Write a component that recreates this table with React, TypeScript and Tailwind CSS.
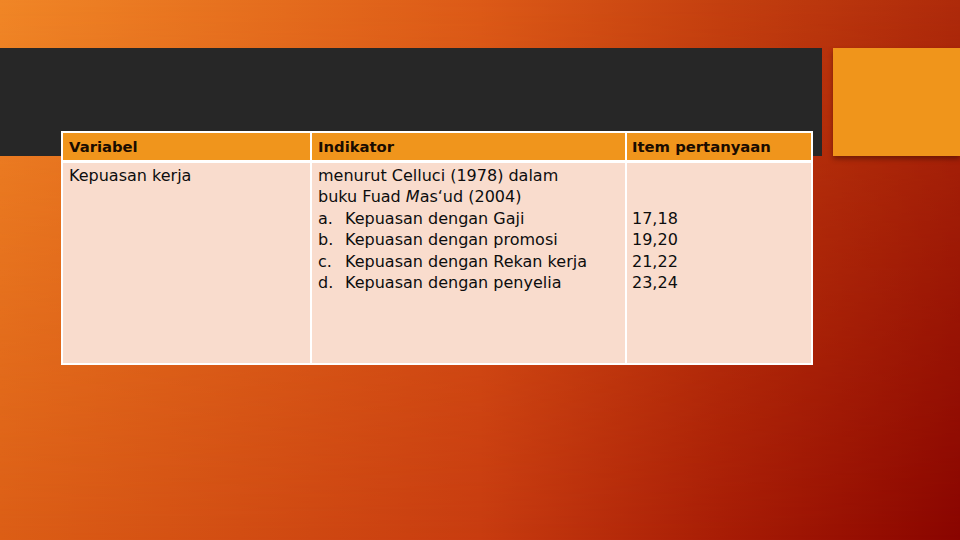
import React from "react";

export default function App() {
  const font = { fontFamily: '"DejaVu Sans", Verdana, sans-serif' };
  return (
    <div
      className="w-[960px] h-[540px] overflow-hidden bg-[linear-gradient(to_right,#dc5e16_0%,#c83c10_50%,#a81d06_75%,#8a0500_100%)]"
      style={font}
    >
      <div className="w-[960px] h-[540px] bg-[linear-gradient(to_right,#f08626_0%,#dc5a17_50%,#c4400f_75%,#ae2a0a_100%)] [mask-image:linear-gradient(to_bottom,black_0%,transparent_100%)]" />
      <div className="relative -mt-[540px]">
        <div className="pt-[48px] flex">
          <div className="w-[822px] h-[108px] bg-[#272727]" />
          <div className="ml-[11px] w-[127px] h-[108px] bg-[#f0951b] shadow-[0_3px_5px_rgba(0,0,0,0.35)]" />
        </div>
        <div className="relative -mt-[25px] ml-[61px]">
          <table className="w-[750px] border-collapse table-fixed text-[#0d0d0d]">
            <colgroup>
              <col className="w-[249px]" />
              <col className="w-[315px]" />
              <col className="w-[186px]" />
            </colgroup>
            <thead>
              <tr className="h-[29px] bg-[#f0951c] text-[14.8px] font-bold leading-[20px] text-[#1a0c00]">
                <th className="border-2 border-b-[3px] border-white px-[6px] pt-[1px] text-left align-middle">Variabel</th>
                <th className="border-2 border-b-[3px] border-white px-[6px] pt-[1px] text-left align-middle">Indikator</th>
                <th className="border-2 border-b-[3px] border-white px-[5px] pt-[1px] text-left align-middle">Item pertanyaan</th>
              </tr>
            </thead>
            <tbody>
              <tr className="h-[203px] bg-[#f9dccd] text-[16px] leading-[21.6px]">
                <td className="border-2 border-white px-[6px] pt-[2px] align-top">Kepuasan kerja</td>
                <td className="border-2 border-white px-[6px] pt-[2px] align-top">
                  <div>menurut Celluci (1978) dalam</div>
                  <div>
                    buku Fuad <span className="italic">M</span>as‘ud (2004)
                  </div>
                  <div><span className="inline-block w-[27px]">a.</span>Kepuasan dengan Gaji</div>
                  <div><span className="inline-block w-[27px]">b.</span>Kepuasan dengan promosi</div>
                  <div><span className="inline-block w-[27px]">c.</span>Kepuasan dengan Rekan kerja</div>
                  <div><span className="inline-block w-[27px]">d.</span>Kepuasan dengan penyelia</div>
                </td>
                <td className="border-2 border-white px-[5px] pt-[2px] align-top">
                  <div>&nbsp;</div>
                  <div>&nbsp;</div>
                  <div>17,18</div>
                  <div>19,20</div>
                  <div>21,22</div>
                  <div>23,24</div>
                </td>
              </tr>
            </tbody>
          </table>
        </div>
      </div>
    </div>
  );
}
